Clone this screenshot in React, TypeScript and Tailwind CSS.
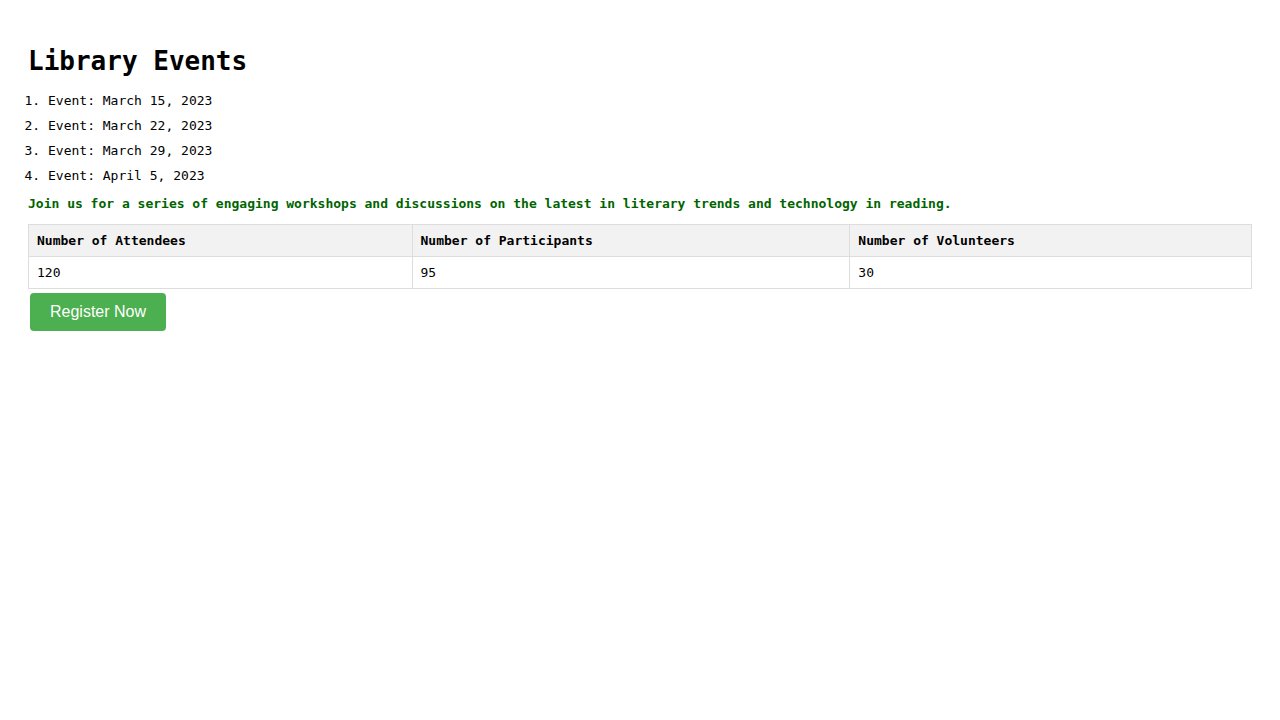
import React from 'react';

const events = ['March 15, 2023', 'March 22, 2023', 'March 29, 2023', 'April 5, 2023'];

const App: React.FC = () => {
    return (
        <div className="min-h-screen bg-white px-[28px] pt-[45px] text-black" style={{ fontFamily: '"DejaVu Sans Mono", monospace' }}>
            {/* Header */}
            <h1 className="text-[26px] leading-[32px] font-bold">Library Events</h1>

            {/* Event list */}
            <ol className="mt-[11px] list-decimal pl-[20px] text-[13px] leading-[25px]">
                {events.map((d) => (
                    <li key={d}>Event: {d}</li>
                ))}
            </ol>

            <p className="mt-[8px] text-[13px] leading-[16px] font-bold text-[#006400]">
                Join us for a series of engaging workshops and discussions on the latest in literary trends and technology in reading.
            </p>

            {/* Stats */}
            <table className="mt-[12px] w-full border-collapse text-[13px] leading-[15px]">
                <thead>
                    <tr className="bg-[#f2f2f2]">
                        <th className="border border-[#ddd] px-[8px] py-[8px] text-left font-bold">Number of Attendees</th>
                        <th className="border border-[#ddd] px-[8px] py-[8px] text-left font-bold">Number of Participants</th>
                        <th className="border border-[#ddd] px-[8px] py-[8px] text-left font-bold">Number of Volunteers</th>
                    </tr>
                </thead>
                <tbody>
                    <tr>
                        <td className="border border-[#ddd] px-[8px] py-[8px]">120</td>
                        <td className="border border-[#ddd] px-[8px] py-[8px]">95</td>
                        <td className="border border-[#ddd] px-[8px] py-[8px]">30</td>
                    </tr>
                </tbody>
            </table>

            <button
                className="mt-[4px] ml-[2px] h-[38px] rounded-[4px] bg-[#4CAF50] px-[20px] text-[16px] text-white"
                style={{ fontFamily: '"Liberation Sans", Arial, sans-serif' }}
            >
                Register Now
            </button>
        </div>
    );
};

export default App;
